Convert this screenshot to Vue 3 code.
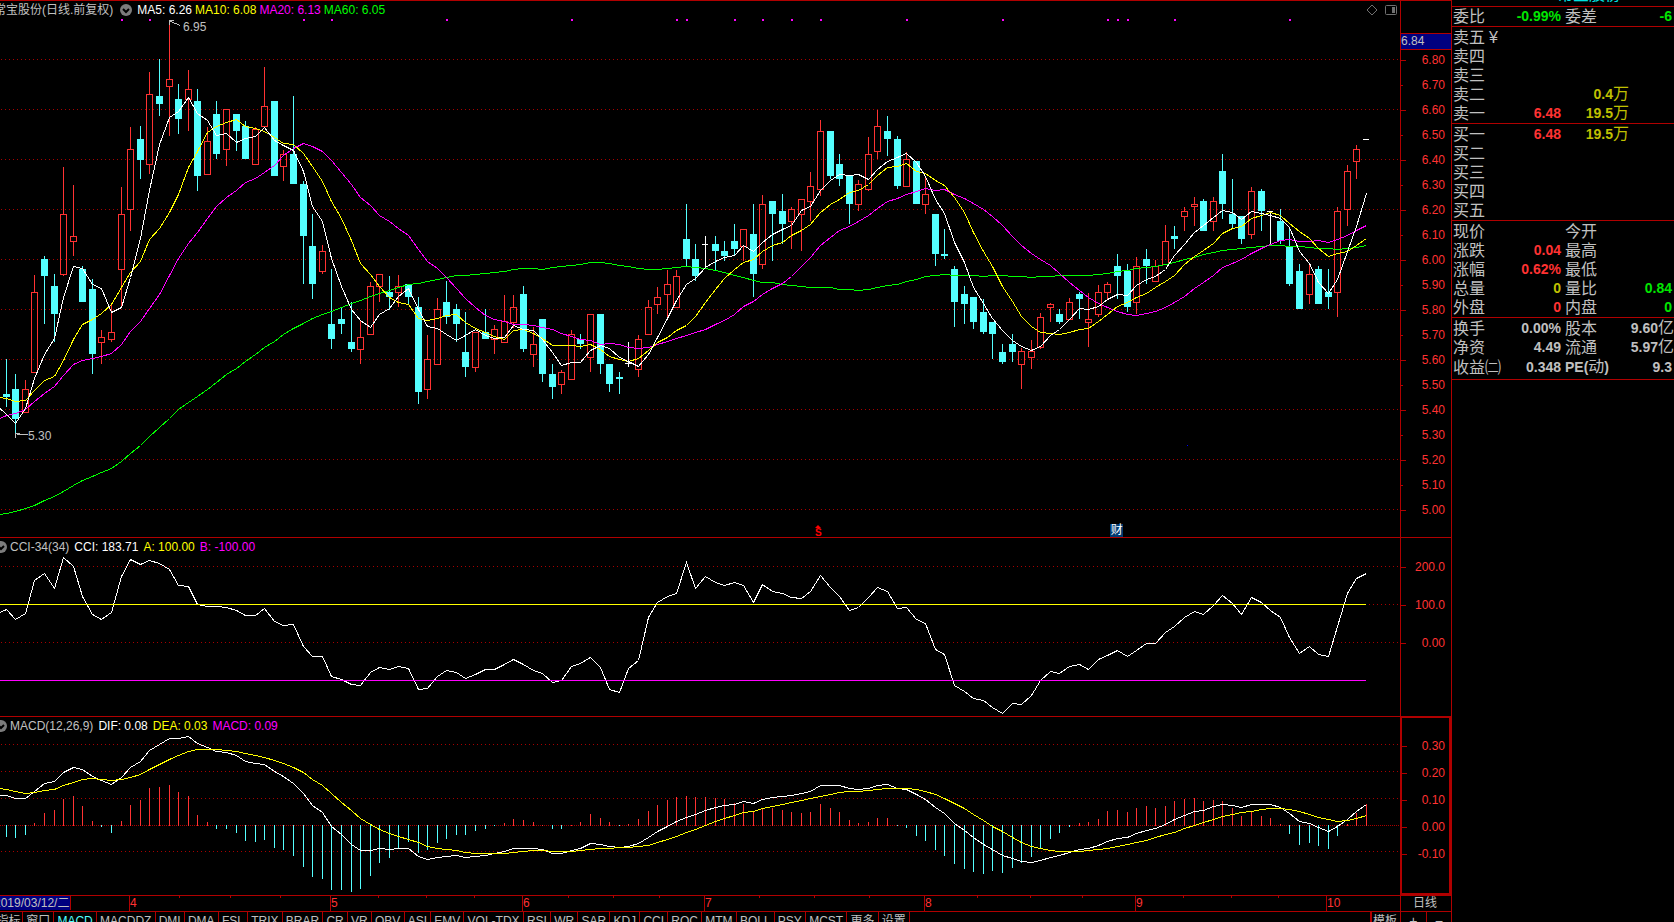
<script setup>
const RED = '#ff3232'
const CYAN = '#54ffff'
const WHITE = '#ffffff'

/* One row per trading day: colour, high, body top, body bottom, low.
   Levels count downward from the top of the pane, 726 units to one yuan. */
const days = `
c 1042 1144 1153 1182|c 1086 1130 1217 1265|r 1103 1130 1197 1199|r 799 849 1081 1083|c 743 752 801 941
c 796 830 912 993|r 485 622 798 801|r 537 686 702 743|c 772 781 877 877|c 810 839 1028 1086
r 958 980 995 1057|r 880 965 986 992|r 543 622 782 893|r 369 434 608 671|c 366 404 466 520
r 209 274 478 505|c 171 279 302 337|r 65 230 252 395|c 244 287 346 389|r 203 259 289 380
c 258 293 511 555|r 369 410 507 507|c 293 331 447 462|r 318 318 434 482|c 331 331 380 438
c 351 366 462 462|r 368 376 477 478|r 195 309 368 368|c 293 293 511 511|r 436 448 484 526
c 279 447 534 534|c 526 534 685 825|c 621 714 825 868|r 711 730 789 796|c 781 941 984 1013
c 893 926 941 970|c 877 993 1013 1022|r 931 980 1015 1057|r 819 831 971 971|r 797 797 832 877
c 801 848 862 899|r 799 831 850 891|c 825 825 862 886|c 862 891 1138 1173|r 973 1043 1131 1159
r 865 898 1058 1058|c 816 877 920 941|c 883 897 941 993|c 906 1022 1066 1095|r 964 965 1067 1080
c 897 964 984 984|r 944 956 985 1028|r 857 934 994 994|r 857 892 937 952|c 830 854 1013 1022
r 951 1000 1029 1066|c 926 926 1086 1109|c 1057 1086 1124 1159|r 1074 1081 1116 1144|r 958 971 1102 1103
c 970 984 999 1013|r 913 913 1038 1080|c 912 912 1057 1086|c 1057 1057 1115 1138|c 1080 1095 1101 1144
w 993 1057 1057 1066|r 973 985 1073 1095|r 871 892 971 971|r 833 863 884 912|r 784 826 855 925
r 784 802 892 892|c 592 694 752 773|c 709 752 801 815|w 685 709 709 781|c 685 709 729 784
c 700 729 743 758|c 650 700 723 740|r 666 666 716 758|c 592 679 796 862|r 566 593 768 781
c 584 584 621 758|c 563 613 650 709|r 601 608 643 723|r 579 579 622 729|r 499 541 586 642
r 348 381 550 570|c 380 380 511 520|c 447 476 520 540|c 510 510 592 650|r 523 535 594 613
r 398 448 550 555|r 318 367 440 462|c 337 380 404 453|c 395 404 540 549|r 442 463 542 542
c 467 467 592 592|r 513 564 594 621|c 621 621 738 772|c 665 738 743 752|c 772 781 877 950
c 830 854 883 941|c 862 862 935 955|c 868 906 964 970|c 935 935 970 1042|c 999 1022 1051 1057
c 970 999 1022 1051|r 1010 1022 1058 1130|r 987 1022 1039 1071|r 909 921 1008 1013|r 880 884 892 936
c 897 912 935 941|r 865 878 928 930|c 848 854 868 926|r 851 927 937 1008|r 828 849 914 920
r 819 826 850 868|c 738 772 801 868|c 767 787 891 906|r 746 773 879 912|c 723 752 773 825
r 755 773 818 819|r 653 701 768 768|c 656 685 694 723|r 601 614 629 671|r 572 593 600 656
c 578 584 671 671|r 572 585 643 671|c 447 497 592 636|c 520 621 650 665|c 627 627 694 709
r 543 556 681 694|c 549 555 613 671|w 613 613 613 709|c 607 642 700 709|c 665 714 825 830
c 767 787 897 897|r 769 797 856 883|c 772 781 883 883|c 781 848 862 897|r 601 614 850 920
r 479 497 609 656|r 421 434 469 520|w 405 405 405 405`
  .trim()
  .split(/[|\n]/)
  .map((row) => {
    const [kind, ...v] = row.split(' ')
    const [high, top, bottom, low] = v.map(Number)
    return { kind, high, top, bottom, low, close: kind === 'c' ? bottom : top }
  })

const col = (i) => Math.floor(6.15 + 9.58 * i)
const priceY = (v) => v / 2.904

const candles = days.map((d, i) => {
  const x = col(i)
  const high = Math.round(priceY(d.high))
  const low = Math.max(high + 1, Math.round(priceY(d.low)))
  const edge = d.kind === 'c' ? Math.round : Math.floor
  const top = edge(priceY(d.top))
  const bottom = Math.max(top + 1, edge(priceY(d.bottom)))
  return { ...d, x, high, low, top, bottom }
})

/* Averages of the first days, whose earlier closes lie off screen; the first value is at the left edge. */
const heads = {
  5: [1187, 1203, 1230, 1186, 1100],
  10: [1155, 1157, 1165, 1162, 1133, 1105, 1092, 1047, 985, 941],
  20: [1214, 1208, 1200, 1189, 1167, 1142, 1122, 1089, 1059, 1046, 1041, 1034, 1026, 1001, 962, 934, 895, 854, 801, 752],
  60: [
    1494, 1491, 1485, 1477, 1467, 1454, 1442, 1427, 1409, 1395, 1383, 1372, 1360, 1341, 1316, 1294, 1267, 1241, 1215,
    1190, 1169, 1151, 1131, 1110, 1088, 1070, 1049, 1029, 1009, 991, 971, 954, 940, 926, 914, 905, 894, 882, 873, 860,
    852, 845, 834, 827, 823, 817, 811, 805, 801, 799, 797, 794, 791, 787, 783, 781, 779, 782, 777, 773,
  ],
}

const toPoints = (series, y) =>
  series.map((v, i) => `${i === 0 ? 0 : col(i - 1) + 0.5},${Math.floor(y(v)) + 0.5}`).join(' ')

function average(n) {
  const out = [...heads[n]]
  for (let i = n - 1; i < days.length; i++) {
    let sum = 0
    for (let k = 0; k < n; k++) sum += days[i - k].close
    out.push(sum / n)
  }
  return toPoints(out, priceY)
}

const averages = [
  { color: '#00ff00', points: average(60) },
  { color: '#ff00ff', points: average(20) },
  { color: '#ffff00', points: average(10) },
  { color: WHITE, points: average(5) },
]

const cciSeries = [
  229, 221, 249, 233, 133, 112, 157, 65, 92, 181, 235, 249, 229, 122, 70, 86, 73, 82, 100, 147, 152, 205, 211, 211, 214,
  223, 238, 238, 218, 256, 268, 265, 330, 361, 361, 421, 430, 444, 448, 408, 394, 400, 391, 398, 460, 456, 422, 403,
  410, 428, 415, 400, 400, 384, 370, 386, 403, 412, 439, 433, 391, 382, 365, 394, 459, 469, 397, 374, 243, 199, 181,
  171, 79, 157, 122, 139, 148, 139, 149, 199, 146, 166, 173, 184, 187, 166, 118, 154, 181, 223, 213, 184, 154, 167, 217,
  214, 250, 263, 341, 355, 448, 467, 487, 494, 514, 532, 502, 506, 479, 433, 407, 412, 392, 385, 400, 371, 358, 343,
  361, 344, 322, 322, 288, 272, 244, 227, 235, 209, 179, 202, 235, 185, 200, 224, 244, 304, 352, 332, 355, 361, 272,
  173, 127, 112,
]
const difSeries = [
  778, 778, 787, 787, 766, 743, 736, 709, 694, 701, 720, 733, 745, 723, 693, 676, 643, 626, 608, 607, 601, 623, 634,
  646, 649, 658, 676, 683, 686, 707, 720, 741, 771, 808, 829, 870, 895, 924, 943, 943, 937, 941, 937, 937, 961, 970,
  964, 961, 958, 964, 961, 958, 953, 947, 938, 937, 937, 941, 952, 952, 944, 937, 922, 925, 931, 934, 931, 921, 905,
  887, 872, 857, 844, 836, 823, 814, 808, 804, 796, 803, 790, 784, 781, 778, 773, 766, 748, 748, 748, 757, 760, 757,
  748, 745, 757, 761, 776, 790, 813, 833, 861, 884, 905, 925, 940, 958, 967, 975, 979, 973, 964, 958, 949, 941, 937,
  929, 915, 908, 904, 892, 883, 877, 866, 851, 838, 826, 822, 811, 805, 808, 814, 805, 805, 805, 814, 833, 856, 862,
  875, 886, 872, 850, 827, 806,
]
const deaSeries = [
  758, 760, 767, 772, 770, 763, 760, 749, 739, 731, 728, 730, 733, 730, 724, 715, 700, 685, 670, 658, 646, 640, 640,
  640, 643, 646, 652, 657, 664, 672, 682, 694, 708, 730, 748, 773, 798, 823, 847, 866, 880, 892, 902, 911, 919, 932,
  937, 940, 943, 949, 952, 952, 952, 952, 949, 946, 943, 942, 946, 946, 946, 943, 940, 937, 937, 934, 934, 931, 928,
  919, 911, 901, 889, 879, 867, 856, 848, 838, 829, 826, 817, 811, 805, 799, 793, 787, 781, 775, 769, 766, 765, 763,
  760, 757, 757, 757, 760, 766, 775, 787, 802, 818, 835, 852, 871, 886, 903, 918, 931, 937, 943, 946, 946, 945, 943,
  940, 937, 932, 925, 919, 913, 904, 896, 889, 878, 868, 859, 850, 842, 835, 829, 826, 820, 817, 817, 820, 826, 835,
  844, 850, 856, 853, 846, 839,
]
const subY = (v) => 536 + v / 3
const cciPoints = toPoints(cciSeries, subY)
const difPoints = toPoints(difSeries, subY)
const deaPoints = toPoints(deaSeries, subY)

const ZERO = 825
const bars = difSeries.slice(1).map((dif, i) => {
  const h = ((deaSeries[i + 1] - dif) * 2) / 3
  const len = Math.max(1, Math.round(Math.abs(h)))
  return { x: col(i), y: h > 0 ? ZERO + 1 - len : ZERO, h: len, color: h > 0 ? RED : CYAN }
})

const eventDots = [12, 15, 31, 34, 46, 59, 70, 71, 76, 79, 82, 85, 94, 104, 115, 116, 117, 122, 134].map(col)
const priceGrid = Array.from({ length: 10 }, (_, k) => 59 + 50 * k)
const priceLabels = Array.from({ length: 19 }, (_, k) => (6.8 - k * 0.1).toFixed(2))
const cciLabels = ['200.0', '100.0', '0.00']
const macdLabels = ['0.30', '0.20', '0.10', '0.00', '-0.10']

const months = [
  { x: 129, name: '4' },
  { x: 330, name: '5' },
  { x: 522, name: '6' },
  { x: 704, name: '7' },
  { x: 924, name: '8' },
  { x: 1135, name: '9' },
  { x: 1326, name: '10' },
]
const weekTicks = [179, 230, 280, 378, 426, 474, 568, 613, 659, 759, 814, 869, 977, 1030, 1082, 1183, 1231, 1278]
const share = (x) => ({ left: (x / 1400) * 100 + '%' })

const tabs = [
  '窗口', 'MACD', 'MACDDZ', 'DMI', 'DMA', 'FSL', 'TRIX', 'BRAR', 'CR', 'VR', 'OBV', 'ASI', 'EMV', 'VOL-TDX', 'RSI',
  'WR', 'SAR', 'KDJ', 'CCI', 'ROC', 'MTM', 'BOLL', 'PSY', 'MCST', '更多', '设置',
]

const sells = [
  { name: '卖五', mark: '¥' },
  { name: '卖四' },
  { name: '卖三' },
  { name: '卖二', volume: '0.4' },
  { name: '卖一', price: '6.48', volume: '19.5' },
]
const buys = [
  { name: '买一', price: '6.48', volume: '19.5' },
  { name: '买二' },
  { name: '买三' },
  { name: '买四' },
  { name: '买五' },
]
const books = [sells, buys]
const facts = [
  [{ a: '委比', av: '-0.99%', ac: 'down', b: '委差', bv: '-6', bc: 'down' }],
  [
    { a: '现价', b: '今开' },
    { a: '涨跌', av: '0.04', ac: 'up', b: '最高' },
    { a: '涨幅', av: '0.62%', ac: 'up', b: '最低' },
    { a: '总量', av: '0', ac: 'vol', b: '量比', bv: '0.84', bc: 'down' },
    { a: '外盘', av: '0', ac: 'up', b: '内盘', bv: '0', bc: 'down' },
  ],
  [
    { a: '换手', av: '0.00%', b: '股本', bv: '9.60', unit: '亿' },
    { a: '净资', av: '4.49', b: '流通', bv: '5.97', unit: '亿' },
    { a: '收益㈡', av: '0.348', pe: true, bv: '9.3' },
  ],
]
</script>

<template>
  <div class="terminal">
    <section class="pane price-pane">
      <svg class="plot" viewBox="0 1 1400 536" preserveAspectRatio="none" aria-hidden="true">
        <line v-for="y in priceGrid" :key="y" class="grid" x1="1" x2="1400" :y1="y + 0.5" :y2="y + 0.5" />
        <rect v-for="x in eventDots" :key="'e' + x" :x="x" y="19" width="2" height="2" fill="#ff00ff" />
        <g v-for="c in candles" :key="c.x">
          <template v-if="c.kind === 'c'">
            <rect :x="c.x" :y="c.high" width="1" :height="c.low - c.high" :fill="CYAN" />
            <rect :x="c.x - 3" :y="c.top" width="7" :height="c.bottom - c.top" :fill="CYAN" />
          </template>
          <template v-else-if="c.kind === 'r'">
            <rect v-if="c.top > c.high" :x="c.x" :y="c.high" width="1" :height="c.top - c.high" :fill="RED" />
            <rect v-if="c.low > c.bottom" :x="c.x" :y="c.bottom" width="1" :height="c.low - c.bottom" :fill="RED" />
            <rect
              :x="c.x - 2.5" :y="c.top + 0.5" width="6" :height="c.bottom - c.top"
              fill="none" :stroke="RED"
            />
          </template>
          <template v-else>
            <rect :x="c.x" :y="c.high" width="1" :height="c.low - c.high" :fill="WHITE" />
            <rect :x="c.x - 3" :y="c.top" width="6" height="1" :fill="WHITE" />
          </template>
        </g>
        <polyline v-for="m in averages" :key="m.color" class="curve" :points="m.points" :stroke="m.color" />
        <path class="pointer" d="M180.5 25.5L170.5 21.5M173.5 20.5H169.5V24.5M27.5 434.5H16.5M19.5 433.5H15.5V437.5" />
        <rect x="1187" y="445" width="1" height="1" fill="#0000ff" />
      </svg>
      <header class="legend">
        <h1 class="name stock">常宝股份(日线.前复权)</h1>
        <button class="toggle" type="button" aria-label="展开">
          <svg viewBox="0 0 12 12"><circle cx="6" cy="6" r="6" /><path d="M3 5L6 8L9 5" /></svg>
        </button>
        <span class="white">MA5: 6.26</span>
        <span class="yellow">MA10: 6.08</span>
        <span class="magenta">MA20: 6.13</span>
        <span class="green">MA60: 6.05</span>
        <span class="tools">
          <button type="button" aria-label="标记">
            <svg viewBox="0 0 12 12"><path d="M6 1L11 6L6 11L1 6Z" /></svg>
          </button>
          <button type="button" aria-label="侧栏">
            <svg viewBox="0 0 12 12">
              <rect x="0.5" y="1.5" width="11" height="9" rx="1" />
              <path class="solid" d="M7 3H10V9H7Z" />
            </svg>
          </button>
        </span>
      </header>
      <span class="note high">6.95</span>
      <span class="note low">5.30</span>
      <span class="badge split"><svg viewBox="0 0 6 3"><path d="M0 3L3 0L6 3Z" /></svg>S</span>
      <span class="badge report">财</span>
    </section>
    <aside class="axis price-axis">
      <ul>
        <li v-for="p in priceLabels" :key="p">{{ p }}</li>
      </ul>
      <span class="cursor-price">6.84</span>
    </aside>

    <section class="pane">
      <svg class="plot" viewBox="0 538 1400 178" preserveAspectRatio="none" aria-hidden="true">
        <line v-for="y in [566, 604, 642]" :key="y" class="grid" x1="1" x2="1400" :y1="y + 0.5" :y2="y + 0.5" />
        <polyline class="curve" :points="cciPoints" :stroke="WHITE" />
        <rect x="0" y="604" width="1366" height="1" fill="#ffff00" />
        <rect x="0" y="680" width="1366" height="1" fill="#ff00ff" />
      </svg>
      <header class="legend sub">
        <button class="toggle" type="button" aria-label="展开">
          <svg viewBox="0 0 12 12"><circle cx="6" cy="6" r="6" /><path d="M3 5L6 8L9 5" /></svg>
        </button>
        <span class="name">CCI-34(34)</span>
        <span class="white">CCI: 183.71</span>
        <span class="yellow">A: 100.00</span>
        <span class="magenta">B: -100.00</span>
      </header>
    </section>
    <aside class="axis cci-axis">
      <ul>
        <li v-for="p in cciLabels" :key="p">{{ p }}</li>
      </ul>
    </aside>

    <section class="pane">
      <svg class="plot" viewBox="0 717 1400 178" preserveAspectRatio="none" aria-hidden="true">
        <line v-for="y in [744, 771, 798, 851]" :key="y" class="grid" x1="1" x2="1400" :y1="y + 0.5" :y2="y + 0.5" />
        <line class="grid zero" x1="0" x2="1400" :y1="ZERO + 0.5" :y2="ZERO + 0.5" />
        <rect v-for="b in bars" :key="b.x" :x="b.x" :y="b.y" width="1" :height="b.h" :fill="b.color" />
        <polyline class="curve" :points="difPoints" :stroke="WHITE" />
        <polyline class="curve" :points="deaPoints" stroke="#ffff00" />
      </svg>
      <header class="legend sub">
        <button class="toggle" type="button" aria-label="展开">
          <svg viewBox="0 0 12 12"><circle cx="6" cy="6" r="6" /><path d="M3 5L6 8L9 5" /></svg>
        </button>
        <span class="name">MACD(12,26,9)</span>
        <span class="white">DIF: 0.08</span>
        <span class="yellow">DEA: 0.03</span>
        <span class="magenta">MACD: 0.09</span>
      </header>
    </section>
    <aside class="axis macd-axis">
      <ul>
        <li v-for="p in macdLabels" :key="p">{{ p }}</li>
      </ul>
    </aside>

    <div class="dates">
      <span class="cursor-date"><span>2019/03/12/二</span></span>
      <span v-for="m in months" :key="m.name" class="month" :style="share(m.x)">{{ m.name }}</span>
      <i v-for="x in weekTicks" :key="x" class="week" :style="share(x)"></i>
    </div>
    <button class="period" type="button">日线</button>

    <nav class="tabs">
      <div class="tab-list">
        <button class="first" type="button"><span>指标</span></button>
        <button v-for="t in tabs" :key="t" type="button" :class="{ active: t === 'MACD' }">{{ t }}</button>
      </div>
      <button class="template" type="button">模板</button>
    </nav>
    <div class="zoomers">
      <button type="button">+</button>
      <button type="button">−</button>
    </div>

    <aside class="quote">
      <h2>常宝股份</h2>
      <template v-for="(group, g) in facts" :key="g">
        <table class="facts" :class="'group' + g">
          <colgroup><col class="c-name" /><col class="c-price" /><col class="c-second" /><col /></colgroup>
          <tbody>
            <tr v-for="f in group" :key="f.a">
              <th scope="row">{{ f.a }}</th>
              <td :class="f.ac">{{ f.av }}</td>
              <th scope="row"><template v-if="f.pe"><b>PE(</b>动<b>)</b></template><template v-else>{{ f.b }}</template></th>
              <td :class="[f.bc, { wide: f.unit }]">{{ f.bv }}<span v-if="f.unit" class="unit">{{ f.unit }}</span></td>
            </tr>
          </tbody>
        </table>
        <template v-if="g === 0">
          <table v-for="(book, k) in books" :key="'b' + k" class="book">
            <colgroup><col class="c-name" /><col class="c-price" /><col class="c-volume" /><col /></colgroup>
            <tbody>
              <tr v-for="r in book" :key="r.name">
                <th scope="row">{{ r.name }}<span v-if="r.mark" class="mark">{{ r.mark }}</span></th>
                <td class="up">{{ r.price }}</td>
                <td class="vol">{{ r.volume }}<span v-if="r.volume" class="unit">万</span></td>
                <td></td>
              </tr>
            </tbody>
          </table>
        </template>
      </template>
    </aside>
  </div>
</template>

<style>
html,
body {
  background: #000;
  overflow: hidden;
}
</style>

<style scoped>
.terminal {
  display: grid;
  grid-template-columns: minmax(0, 1fr) 51px 223px;
  grid-template-rows: minmax(0, 537fr) minmax(0, 179fr) minmax(0, 179fr) 16px 11px;
  height: 100vh;
  overflow: hidden;
  background: #000;
  color: #c0c0c0;
  font: 12px/16px "Liberation Sans", "Noto Sans CJK SC", sans-serif;
  cursor: default;
}
button {
  margin: 0;
  padding: 0;
  border: 0;
  background: none;
  color: inherit;
  font: inherit;
}
h1,
h2,
ul {
  margin: 0;
  padding: 0;
  font: inherit;
  list-style: none;
}

.pane {
  grid-column: 1;
  position: relative;
  display: grid;
  grid-template: minmax(0, 1fr) / minmax(0, 1fr);
  border-top: 1px solid #b00000;
  overflow: hidden;
}
.plot {
  grid-area: 1 / 1;
  width: 100%;
  height: 100%;
  display: block;
  shape-rendering: crispEdges;
}
.grid {
  stroke: #a80000;
  stroke-dasharray: 1 3;
}
.grid.zero {
  stroke-dasharray: 1 1;
}
.curve {
  fill: none;
}
.pointer {
  fill: none;
  stroke: #c0c0c0;
}

.legend {
  grid-area: 1 / 1;
  align-self: start;
  display: flex;
  align-items: center;
  gap: 3px;
  height: 18px;
  padding-right: 3px;
  white-space: nowrap;
}
.legend.sub {
  height: 17px;
  gap: 5px;
}
.name {
  color: #c0c0c0;
}
.stock {
  margin-left: -6px;
}
.toggle {
  width: 12px;
  height: 12px;
  margin: 0 2px 0 4px;
}
.sub .toggle {
  margin: 0 -2px 0 -5px;
}
.toggle svg {
  display: block;
}
.toggle circle {
  fill: #7c7c7c;
}
.toggle path {
  fill: none;
  stroke: #000;
  stroke-width: 2;
}
.white {
  color: #fff;
}
.yellow {
  color: #ff0;
}
.magenta {
  color: #f0f;
}
.green {
  color: #0f0;
}
.tools {
  display: flex;
  gap: 7px;
  margin-left: auto;
}
.tools button {
  width: 12px;
  height: 12px;
}
.tools svg {
  display: block;
  fill: none;
  stroke: #707070;
}
.tools .solid {
  fill: #707070;
  stroke: none;
}

.note,
.badge {
  position: absolute;
}
.note.high {
  left: 183px;
  top: 18px;
}
.note.low {
  left: 28px;
  top: 427px;
}
.badge {
  bottom: 0;
}
.split {
  left: 58.2%;
  width: 7px;
  color: #f00;
  font-size: 10px;
  font-weight: bold;
  line-height: 9px;
  text-align: center;
}
.split svg {
  display: block;
  width: 6px;
  height: 3px;
  fill: #f00;
}
.report {
  left: 79.3%;
  width: 13px;
  background: #003a70;
  color: #fff;
  line-height: 13px;
  text-align: center;
}

.axis {
  grid-column: 2;
  position: relative;
  border: 0 solid #b00000;
  border-width: 1px 0 0 1px;
  color: #ff3232;
  text-align: right;
}
.axis ul {
  height: 100%;
  box-sizing: border-box;
  display: flex;
  flex-direction: column;
}
.axis li {
  flex: 1;
  display: flex;
  align-items: center;
  justify-content: flex-end;
  position: relative;
  padding-right: 6px;
}
.axis li::before {
  content: "";
  position: absolute;
  left: 0;
  top: 50%;
  width: 5px;
  height: 1px;
  background: #b00000;
}
.price-axis li:nth-child(even)::before {
  width: 2px;
}
.price-axis ul {
  padding: 46px 0 15px;
}
.cci-axis ul {
  padding: 10px 0 54px;
}
.macd-axis {
  border-width: 2px;
}
.macd-axis ul {
  padding: 14px 0 26px;
}
.macd-axis li {
  padding-right: 4px;
}
.cursor-price {
  position: absolute;
  left: 0;
  right: 0;
  top: 32px;
  border: 1px solid #b00000;
  border-width: 1px 0;
  background: #000080;
  color: #c0c0c0;
  line-height: 15px;
  text-align: left;
}

.dates {
  grid-column: 1;
  position: relative;
  border-top: 1px solid #b00000;
  color: #ff3232;
  line-height: 15px;
}
.cursor-date {
  display: block;
  width: 70px;
  height: 14px;
  border-right: 1px solid #b00000;
  background: #000080;
  color: #c0c0c0;
  line-height: 14px;
  white-space: nowrap;
  overflow: hidden;
}
.cursor-date span {
  margin-left: -6px;
}
.month,
.week {
  position: absolute;
  top: 0;
  border-left: 1px solid #b00000;
}
.month {
  height: 15px;
}
.week {
  height: 2px;
}
.period {
  grid-column: 2;
  padding-right: 2px;
  border: 0 solid #b00000;
  border-width: 1px 0 0 1px;
  line-height: 15px;
  text-align: center;
}

.tabs {
  grid-column: 1;
  display: flex;
  justify-content: space-between;
  align-items: flex-start;
  border-top: 1px solid #b00000;
  line-height: 18px;
}
.tab-list {
  display: flex;
  width: 65%;
}
.tab-list button {
  flex: 1 1 auto;
  height: 18px;
  border-right: 1px solid #b00000;
  white-space: nowrap;
}
.tab-list .first {
  flex: 0 0 23px;
  overflow: hidden;
}
.first span {
  display: block;
  margin-left: -5px;
}
.tab-list .active {
  color: #54ffff;
}
.template {
  flex: 0 0 30px;
  height: 18px;
  padding-right: 2px;
  border-left: 2px solid #b00000;
  box-sizing: border-box;
}
.zoomers {
  grid-column: 2;
  display: flex;
  align-items: flex-start;
  border: 0 solid #b00000;
  border-width: 1px 0 0 1px;
  line-height: 18px;
}
.zoomers button {
  flex: 1;
  height: 18px;
  font-size: 14px;
}
.zoomers button + button {
  border-left: 1px solid #b00000;
}

.quote {
  grid-column: 3;
  grid-row: 1 / 6;
  border-left: 1px solid #b00000;
  overflow: hidden;
  font-size: 16px;
}
.quote h2 {
  display: flex;
  align-items: flex-end;
  justify-content: center;
  height: 6px;
  padding-left: 52px;
  overflow: hidden;
  color: #00e0e0;
  line-height: 22px;
}
.quote table {
  width: 100%;
  table-layout: fixed;
  border-collapse: separate;
  border-spacing: 0;
  border-top: 1px solid #b00000;
  padding-top: 1px;
}
.quote .group0 {
  padding-top: 0;
}
.quote .group2 {
  padding-bottom: 2px;
  border-bottom: 1px solid #b00000;
}
.quote th,
.quote td {
  height: 19px;
  padding: 0;
  line-height: 19px;
  white-space: nowrap;
  vertical-align: middle;
}
.quote th {
  padding-left: 1px;
  font-weight: 400;
  text-align: left;
}
.quote th + td + th {
  padding-left: 4px;
}
.quote b {
  font-size: 14px;
}
.quote td {
  font-size: 14px;
  font-weight: bold;
  text-align: right;
}
.facts td:last-child {
  padding-right: 2px;
}
.facts td.wide {
  padding-right: 0;
}
.unit {
  font-size: 16px;
  font-weight: 400;
  line-height: 16px;
}
.mark {
  margin-left: 4px;
  font-weight: 300;
}
.c-name {
  width: 50px;
}
.c-price {
  width: 59px;
}
.c-second {
  width: 56px;
}
.c-volume {
  width: 68px;
}
.up {
  color: #ff3232;
}
.down {
  color: #00e600;
}
.vol {
  color: #c0c000;
}
</style>
